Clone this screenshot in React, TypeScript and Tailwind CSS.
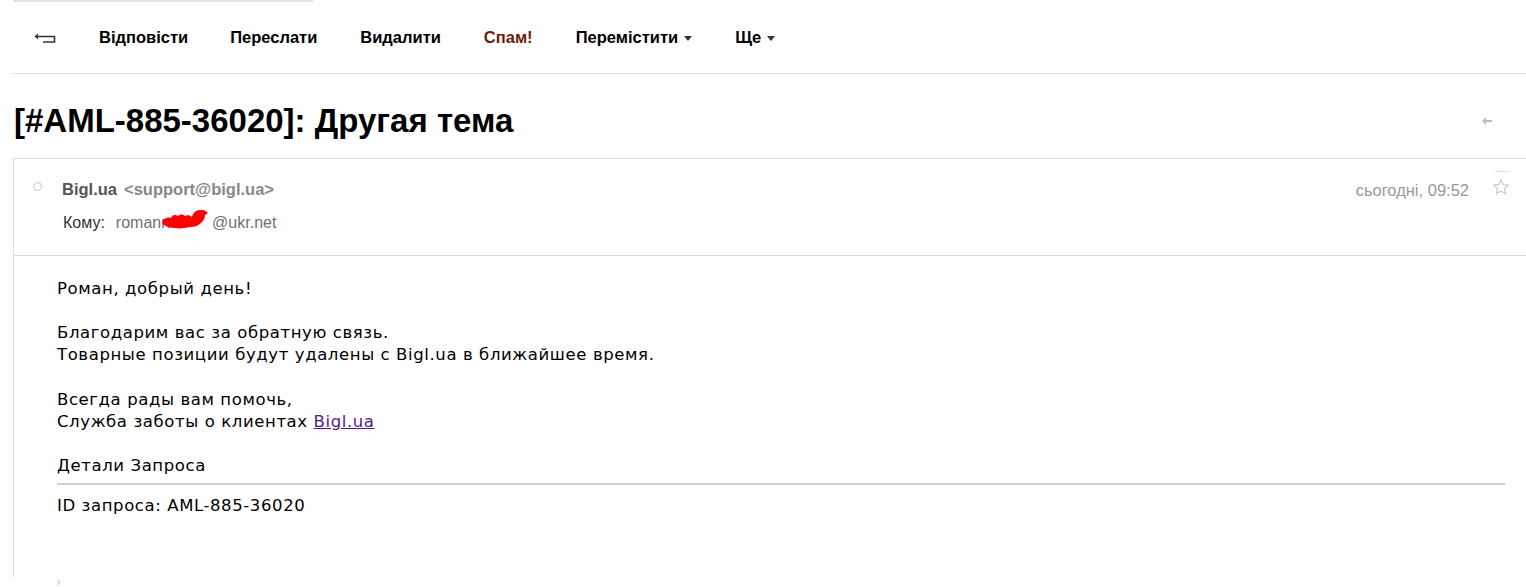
import React from 'react';

const Caret = () => (
  <svg width="8" height="5" viewBox="0 0 8 5" className="ml-[6px] mt-[2px]">
    <path d="M0 0h8L4 5z" fill="#333" />
  </svg>
);

const Toolbar: React.FC = () => (
  <div className="flex items-center h-[73px] pl-[33px] pt-[2px] font-['Liberation_Sans',Arial,sans-serif] text-[16.5px] font-bold text-black">
    <svg width="24" height="12" viewBox="0 0 24 12" className="mr-[42px] mt-[1px]">
      <path d="M5 1.5L1.5 4.5 5 7.5z" fill="#333" />
      <path d="M3 4.5h18.5v5.5H10" stroke="#333" strokeWidth="1.6" fill="none" />
    </svg>
    <span className="mr-[42px]">Відповісти</span>
    <span className="mr-[43px]">Переслати</span>
    <span className="mr-[43px]">Видалити</span>
    <span className="mr-[43px] text-[#6b1d0b]">Спам!</span>
    <span className="mr-[43px] flex items-center">Перемістити<Caret /></span>
    <span className="flex items-center">Ще<Caret /></span>
  </div>
);

export default function App() {
  return (
    <div className="w-[1526px] h-[587px] overflow-hidden bg-white relative">
      <div className="ml-[13px] w-[300px] h-[2px] bg-[#e3e3e3]" />
      <div className="-mt-[2px]">
        <Toolbar />
      </div>
      <div className="ml-[13px] h-px bg-[#dcdcdc]" />
      <div className="flex items-center justify-between h-[84px] pl-[14px] pr-[34px]">
        <h1 className="font-['Liberation_Sans',Arial,sans-serif] font-bold text-[33px] text-black leading-none mt-[8px]">
          [#AML-885-36020]: Другая тема
        </h1>
        <svg width="10" height="8" viewBox="0 0 10 8" className="mt-[10px]">
          <path d="M4 0L0 4l4 4V5h6V3H4z" fill="#bbb" />
        </svg>
      </div>
      <div className="ml-[13px] border-l border-t border-[#dcdcdc] font-['Liberation_Sans',Arial,sans-serif]">
        <div className="relative h-[97px] border-b border-[#dcdcdc]">
          <div className="absolute left-[19px] top-[23px] w-[9px] h-[9px] rounded-full border border-[#c8c8c8]" />
          <div className="pl-[48px] pt-[18px] text-[16.5px] flex items-center">
            <span className="font-bold text-[#555]">Bigl.ua</span>
            <span className="ml-[7px] font-bold text-[#888]">&lt;support@bigl.ua&gt;</span>
          </div>
          <div className="pl-[49px] pt-[9px] text-[16px] flex items-center">
            <span className="text-[#333]">Кому:</span>
            <span className="ml-[11px] text-[#707070] relative">
              romann
              <span className="inline-block w-[42px]" />
              @ukr.net
              <svg width="50" height="22" viewBox="0 0 50 22" className="absolute left-[45px] -top-[2px]">
                <path
                  d="M2 11c2-2 5-3 8-2 1-3 4-4 7-2 2-2 5-2 7 0 2-1 5-1 7 1 1-4 4-7 8-7 3 0 6 2 5 5 0 4-2 6-4 8-3 3-7 4-11 4-5 1-10 2-15 1-4 0-8-1-11-3-2-1-2-3-1-5z"
                  fill="#ff0000"
                />
                <path d="M38 4c2-2 5-2 7 0M5 14c8 3 18 3 26 0" stroke="#ff0000" strokeWidth="3" strokeLinecap="round" fill="none" />
              </svg>
            </span>
          </div>
          <div className="absolute right-[57px] top-[19px] text-[16.5px] text-[#999]">сьогодні, 09:52</div>
          <div className="absolute right-[17px] top-[12px] w-[14px] h-px bg-[#ddd]" />
          <svg width="18" height="18" viewBox="0 0 24 24" className="absolute right-[16px] top-[19px]">
            <path d="M12 2.5l2.9 6.3 6.8.7-5.1 4.6 1.5 6.8L12 17.4l-6.1 3.5 1.5-6.8-5.1-4.6 6.8-.7z" fill="none" stroke="#c4c4c4" strokeWidth="1.4" />
          </svg>
        </div>
        <div className="relative pl-[43px] pr-[21px] pt-[22px] pb-[60px] font-['DejaVu_Sans',Verdana,sans-serif] text-[16.5px] tracking-[0.6px] leading-[22px] text-black">
          <p>Роман, добрый день!</p>
          <p className="mt-[22px]">Благодарим вас за обратную связь.</p>
          <p>Товарные позиции будут удалены с Bigl.ua в ближайшее время.</p>
          <p className="mt-[23px]">Всегда рады вам помочь,</p>
          <p>
            Служба заботы о клиентах{' '}
            <a href="#" className="text-[#551a8b] underline">Bigl.ua</a>
          </p>
          <p className="mt-[22px]">Детали Запроса</p>
          <div className="mt-[6px] h-[2px] bg-[#cfcfcf]" />
          <p className="mt-[10px]">ID запроса: AML-885-36020</p>
          <svg width="6" height="8" viewBox="0 0 6 8" className="absolute left-[43px] top-[322px]">
            <path d="M0 0l5 4-5 4z" fill="#e6e6e6" />
          </svg>
        </div>
      </div>
    </div>
  );
}
